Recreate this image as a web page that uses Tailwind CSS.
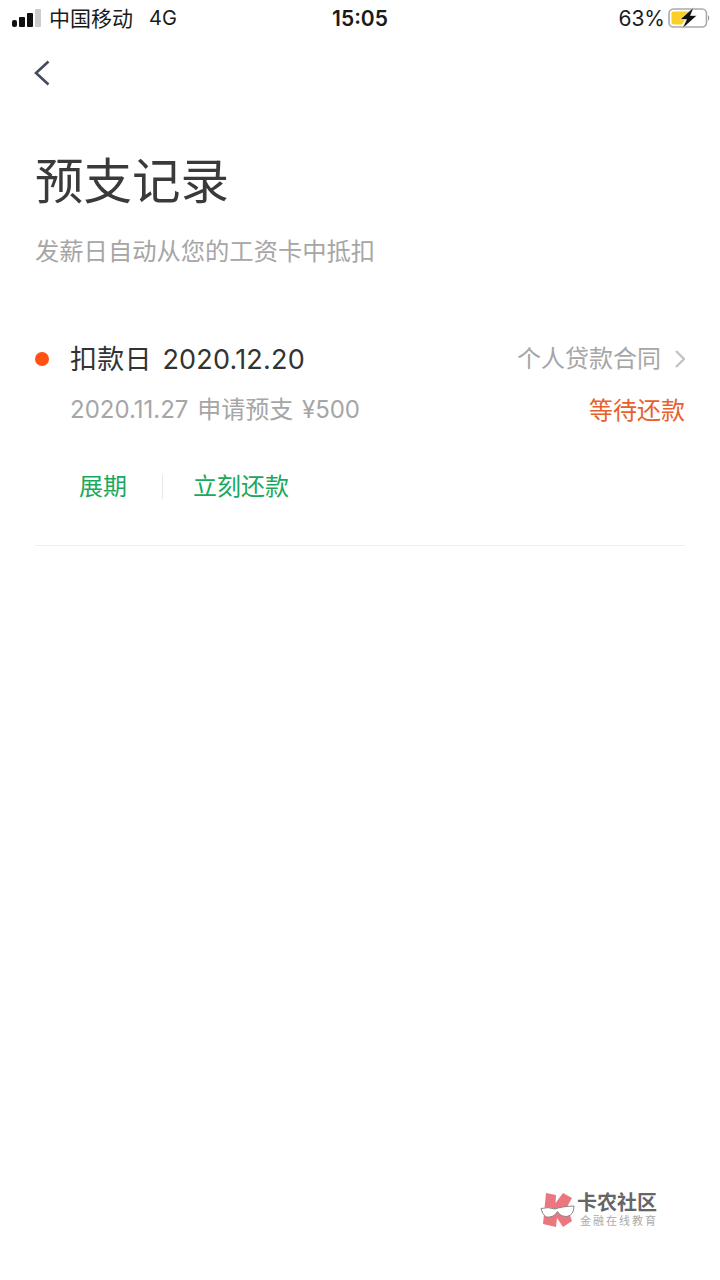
<!DOCTYPE html>
<html lang="zh-CN">
<head>
  <meta charset="UTF-8">
  <meta name="viewport" content="width=device-width, initial-scale=1.0">
  <title>预支记录</title>
  <script src="https://cdn.jsdelivr.net/npm/@tailwindcss/browser@4"></script>
</head>
<body class="bg-white font-['Inter','Noto_Sans_CJK_SC',sans-serif]">
<div class="relative w-[720px] h-[1280px] overflow-hidden bg-white">

  <!-- Status bar -->
  <div class="flex items-center h-9 pl-3 pr-[8px] text-[#1a1a1a]">
    <div class="flex items-end gap-[2px] w-[30px] h-[18px]">
      <span class="w-[5px] h-[7px] bg-[#111] rounded-[2px]"></span>
      <span class="w-[6px] h-[10px] bg-[#111] rounded-[1px]"></span>
      <span class="w-[6px] h-[14px] bg-[#111] rounded-[1px]"></span>
      <span class="w-[6px] h-[18px] bg-[#ccc] rounded-[1px] shrink-0"></span>
    </div>
    <span class="ml-[7px] text-[21px] leading-none">中国移动</span>
    <span class="ml-[16px] text-[20px] leading-none">4G</span>
    <span class="absolute left-0 right-0 text-center text-[21px] font-semibold leading-none">15:05</span>
    <div class="ml-auto flex items-center gap-[3px]">
      <span class="text-[21px] leading-none">63%</span>
      <svg width="44" height="22" viewBox="0 0 44 22">
        <rect x="1" y="2" width="37.5" height="18" rx="4.5" fill="none" stroke="#aaa" stroke-width="1.6"/>
        <path d="M5.5 4.5 H22 L14 17.5 H5.5 Q3.5 17.5 3.5 15.5 V6.5 Q3.5 4.5 5.5 4.5Z" fill="#f9cf2b"/>
        <path d="M40 8 q2.6 3 0 6z" fill="#999"/>
        <path d="M26 0 L12 12.5 H18.5 L14 22 L29 8.5 H22.5 L26 0Z" fill="#111" stroke="#fff" stroke-width="0.6"/>
      </svg>
    </div>
  </div>

  <!-- Back -->
  <div class="h-[72px] pl-[34px] pt-[24px]">
    <svg width="16" height="26" viewBox="0 0 16 26" fill="none" stroke="#444b5c" stroke-width="2.6">
      <path d="M14.5 1.5 L2 13 L14.5 24.5"/>
    </svg>
  </div>

  <!-- Heading -->
  <div class="pl-[35px] pt-[38px]">
    <h1 class="text-[48.5px] leading-[72px] text-[#3a3a3a] font-normal">预支记录</h1>
    <p class="mt-[15px] text-[24.3px] leading-[36px] text-[#a6a6a6]">发薪日自动从您的工资卡中抵扣</p>
  </div>

  <!-- Record -->
  <div class="mx-[35px] mt-[72px] border-b border-[#eee] pb-[40px]">
    <div class="flex items-center h-[36px]">
      <span class="w-[14px] h-[14px] rounded-full bg-[#ff5213]"></span>
      <span class="ml-[21px] text-[27px] leading-none text-[#333] [word-spacing:3px] tracking-[0.2px]">扣款日 2020.12.20</span>
      <span class="ml-auto text-[24px] leading-none text-[#a6a6a6]">个人贷款合同</span>
      <svg class="ml-[14px]" width="10" height="18" viewBox="0 0 10 18" fill="none" stroke="#c4c4c4" stroke-width="2.4">
        <path d="M1 1 L9 9 L1 17"/>
      </svg>
    </div>
    <div class="flex items-center justify-between h-[36px] mt-[15px] pl-[35px]">
      <span class="text-[24px] leading-none text-[#a6a6a6] [word-spacing:2px]">2020.11.27 申请预支 ¥500</span>
      <span class="pt-[2px] text-[24px] leading-none text-[#e8602c]">等待还款</span>
    </div>
    <div class="flex items-center h-[36px] mt-[41px] pl-[44px] text-[24px] leading-none text-[#1aa85c]">
      <span>展期</span>
      <span class="w-px h-[24px] bg-[#e6e6e6] ml-[35px] mr-[30px]"></span>
      <span>立刻还款</span>
    </div>
  </div>

  <!-- Watermark -->
  <div class="absolute left-[540px] top-[1191px] flex items-center gap-[1px]">
    <svg width="36" height="38" viewBox="0 0 36 38">
      <path d="M6 2 L16 4 L15.5 12 L23 2 L32 7 L27 16 L32 30 L23 36 L17 27 L16 36 L3 33Z" fill="#ec7680"/>
      <path d="M1 17.5 Q8 15.5 15 18 Q21 15.5 34 15 Q34 24 27 25.5 Q20 25.5 17.5 20.5 Q14 27 6 26 Q2 23 1 17.5Z" fill="#fff" stroke="#888" stroke-width="1"/>
    </svg>
    <div class="flex flex-col">
      <span class="text-[20px] leading-[22px] font-bold text-[#666]">卡农社区</span>
      <span class="pl-[3px] text-[11px] leading-[14px] tracking-[2px] text-[#aaa]">金融在线教育</span>
    </div>
  </div>
</div>
</body>
</html>
